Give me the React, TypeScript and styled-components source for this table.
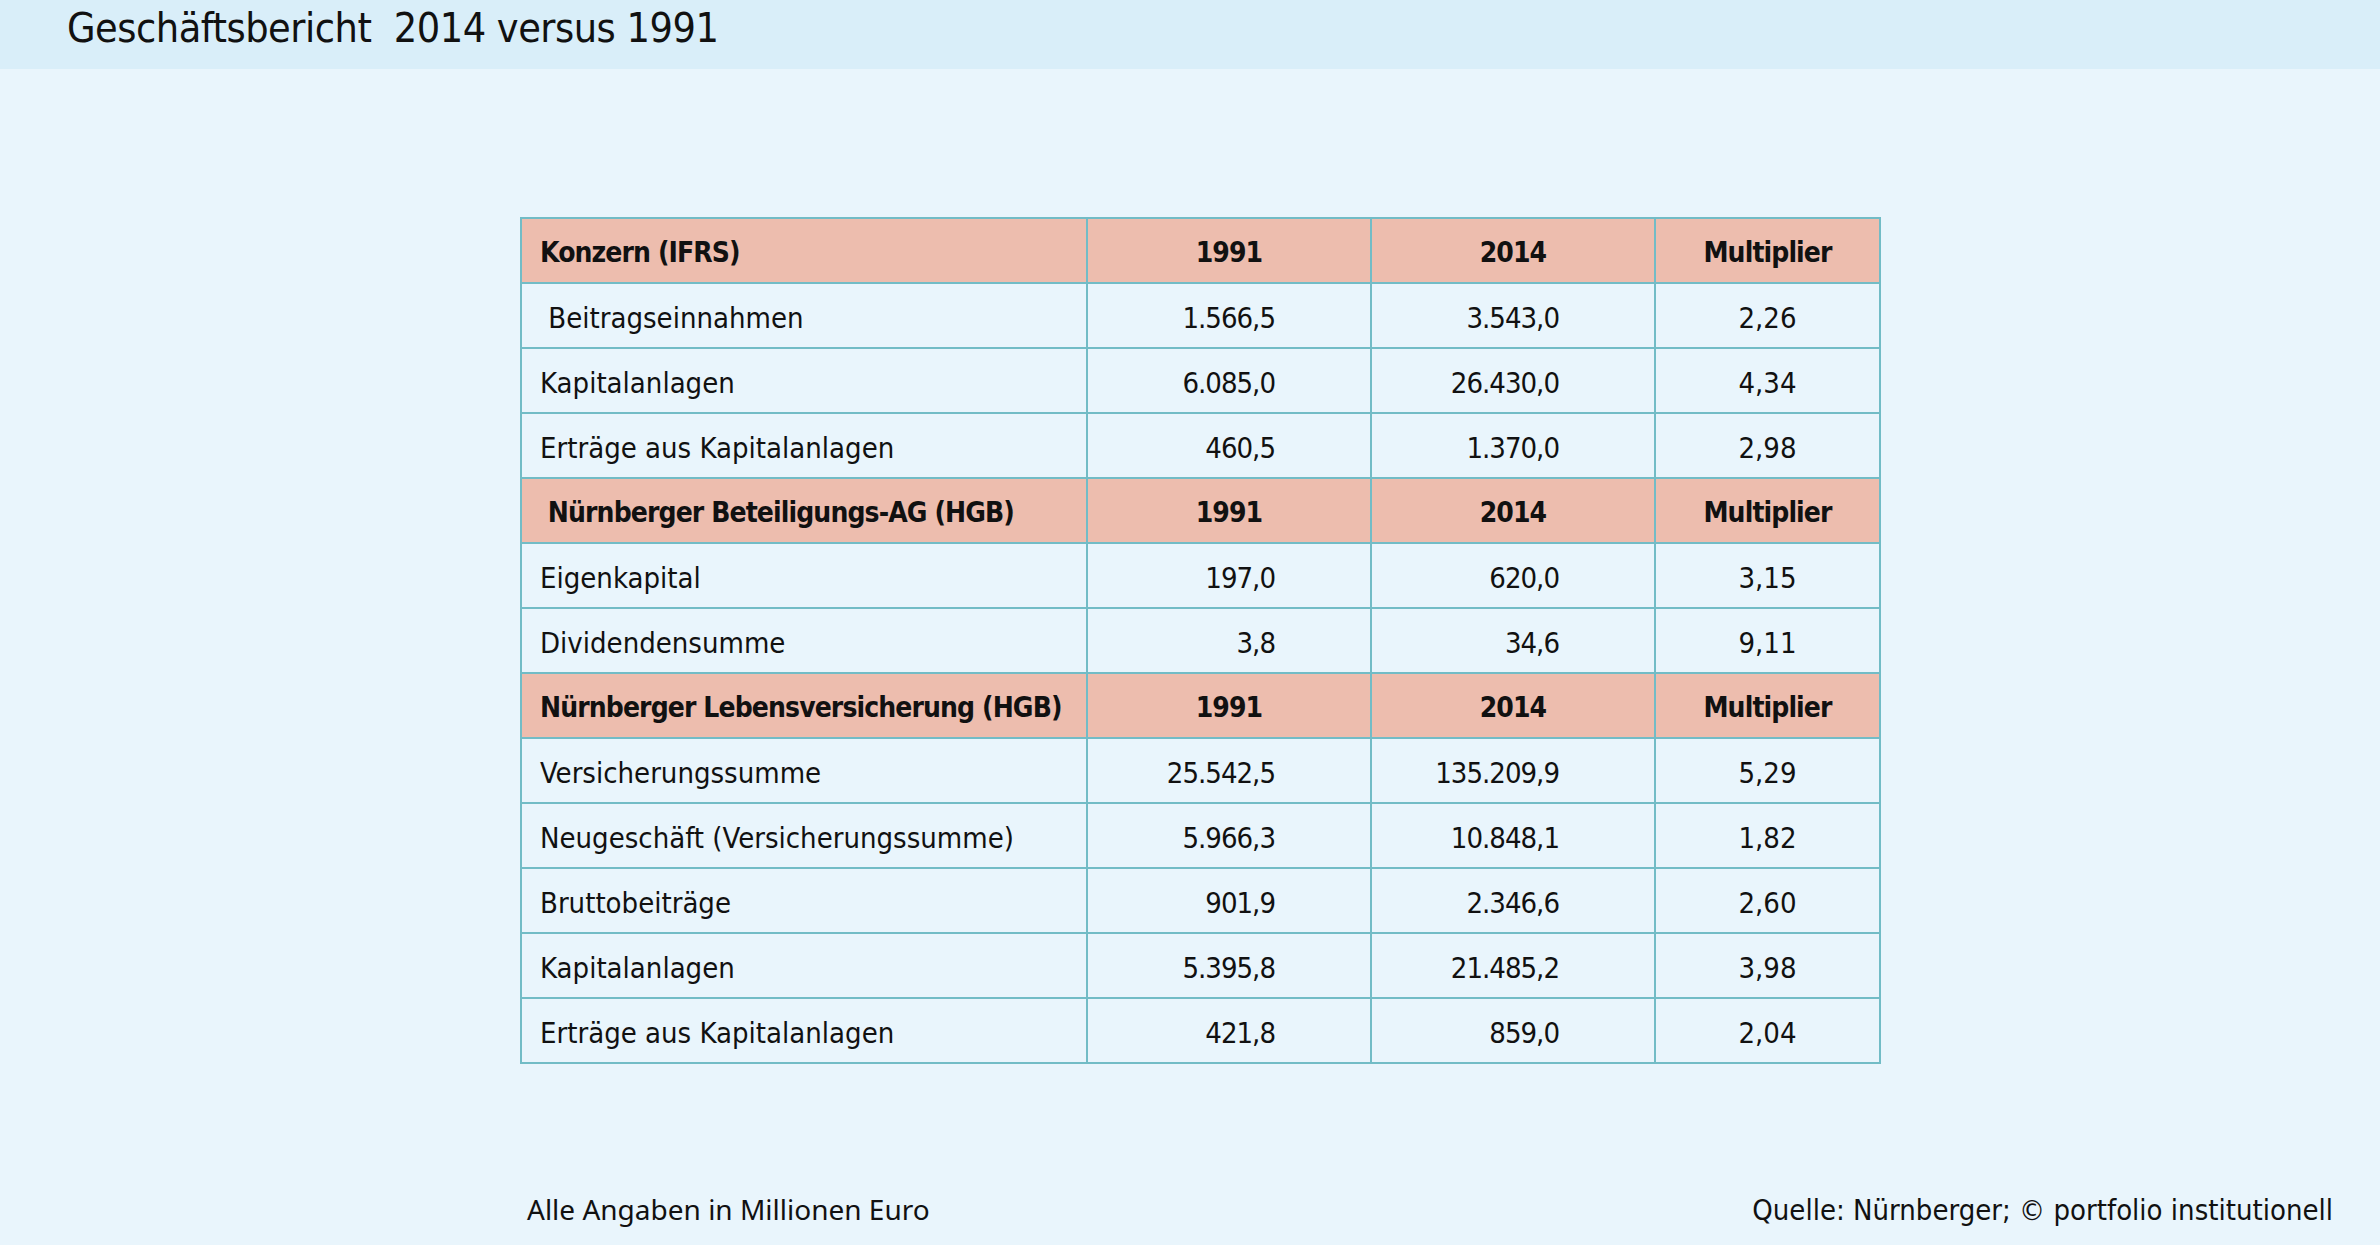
import styled, { createGlobalStyle } from "styled-components";

type Row = { label: string; a: string; b: string; m: string; head?: boolean };

const rows: Row[] = [
  { label: "Konzern (IFRS)", a: "1991", b: "2014", m: "Multiplier", head: true },
  { label: "\u00a0Beitragseinnahmen", a: "1.566,5", b: "3.543,0", m: "2,26" },
  { label: "Kapitalanlagen", a: "6.085,0", b: "26.430,0", m: "4,34" },
  { label: "Erträge aus Kapitalanlagen", a: "460,5", b: "1.370,0", m: "2,98" },
  { label: "\u00a0Nürnberger Beteiligungs-AG (HGB)", a: "1991", b: "2014", m: "Multiplier", head: true },
  { label: "Eigenkapital", a: "197,0", b: "620,0", m: "3,15" },
  { label: "Dividendensumme", a: "3,8", b: "34,6", m: "9,11" },
  { label: "Nürnberger Lebensversicherung (HGB)", a: "1991", b: "2014", m: "Multiplier", head: true },
  { label: "Versicherungssumme", a: "25.542,5", b: "135.209,9", m: "5,29" },
  { label: "Neugeschäft (Versicherungssumme)", a: "5.966,3", b: "10.848,1", m: "1,82" },
  { label: "Bruttobeiträge", a: "901,9", b: "2.346,6", m: "2,60" },
  { label: "Kapitalanlagen", a: "5.395,8", b: "21.485,2", m: "3,98" },
  { label: "Erträge aus Kapitalanlagen", a: "421,8", b: "859,0", m: "2,04" },
];

export default function App() {
  return (
    <>
      <GlobalStyle />
      <Page>
        <TopBar>
          <Title>Geschäftsbericht&nbsp; 2014 versus 1991</Title>
        </TopBar>
        <Main>
          <Table>
            <colgroup>
              <col style={{ width: 566 }} />
              <col style={{ width: 284 }} />
              <col style={{ width: 284 }} />
              <col style={{ width: 225 }} />
            </colgroup>
            <tbody>
              {rows.map((r, i) => (
                <Tr key={i} $head={r.head}>
                  <Label>{r.label}</Label>
                  {r.head ? <Center>{r.a}</Center> : <Num>{r.a}</Num>}
                  {r.head ? <Center>{r.b}</Center> : <Num>{r.b}</Num>}
                  <Center>{r.m}</Center>
                </Tr>
              ))}
            </tbody>
          </Table>
        </Main>
        <Footer>
          <Note>Alle Angaben in Millionen Euro</Note>
          <Source>Quelle: Nürnberger; © portfolio institutionell</Source>
        </Footer>
      </Page>
    </>
  );
}

const GlobalStyle = createGlobalStyle`
  html, body {
    margin: 0;
    padding: 0;
    background: #e9f5fc;
  }
`;

const Page = styled.div`
  width: 2380px;
  height: 1245px;
  display: flex;
  flex-direction: column;
  background: #e9f5fc;
  font-family: "DejaVu Sans Condensed", "DejaVu Sans", sans-serif;
  font-stretch: condensed;
  color: #111;
  overflow: hidden;
`;

const TopBar = styled.div`
  height: 69px;
  box-sizing: border-box;
  background: #d9eef9;
  display: flex;
  align-items: center;
  padding: 0 0 14px 67px;
`;

const Title = styled.h1`
  margin: 0;
  font-size: 41px;
  font-weight: 400;
  letter-spacing: -0.5px;
`;

const Main = styled.div`
  padding: 148px 0 0 520px;
`;

const Table = styled.table`
  border-collapse: collapse;
  table-layout: fixed;
  width: 1360px;
  border: 2px solid #72bcc6;
`;

const Tr = styled.tr<{ $head?: boolean }>`
  height: 65px;
  background: ${(p) => (p.$head ? "#edbdae" : "#e9f5fc")};
  font-weight: ${(p) => (p.$head ? 700 : 400)};

  td {
    border: 2px solid #72bcc6;
    font-size: ${(p) => (p.$head ? "28px" : "29px")};
    letter-spacing: ${(p) => (p.$head ? "-0.9px" : "0")};
    padding: 4px 0 0;
  }
`;

const Label = styled.td`
  padding-left: 18px !important;
  white-space: pre;
`;

const Num = styled.td`
  text-align: right;
  padding-right: 95px !important;
  letter-spacing: -1px !important;
`;

const Center = styled.td`
  text-align: center;
`;

const Footer = styled.div`
  display: flex;
  align-items: baseline;
  justify-content: space-between;
  padding: 126px 47px 0 527px;
`;

const Note = styled.span`
  font-family: "Noto Sans", sans-serif;
  font-stretch: normal;
  font-size: 28px;
`;

const Source = styled.span`
  font-size: 29px;
`;
